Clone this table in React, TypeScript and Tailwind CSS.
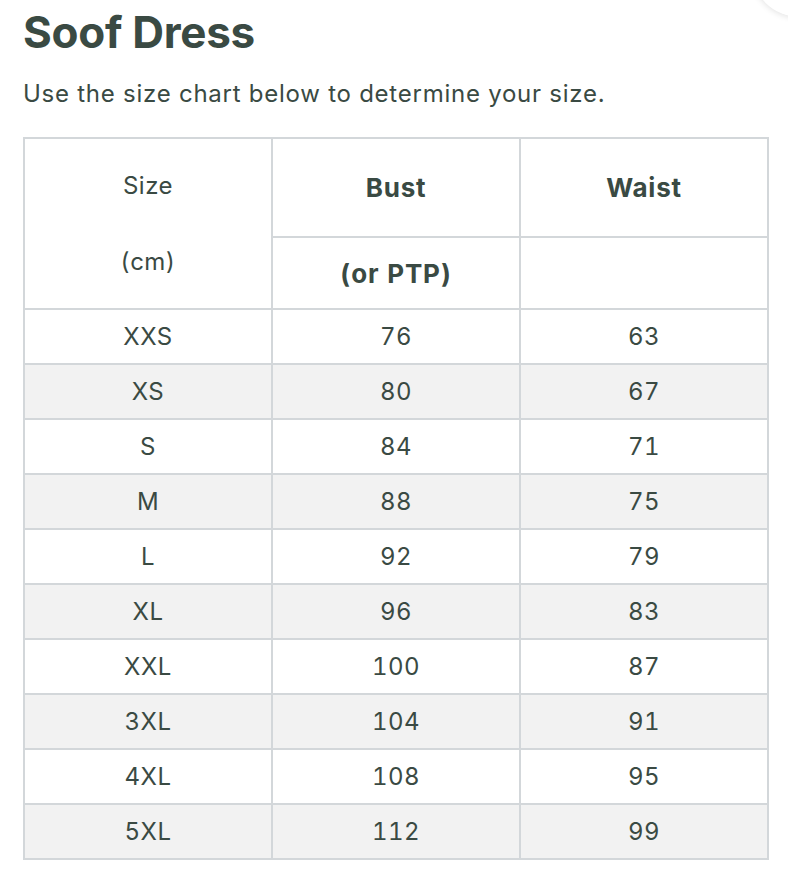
const rows: [string, string, string][] = [
  ["XXS", "76", "63"],
  ["XS", "80", "67"],
  ["S", "84", "71"],
  ["M", "88", "75"],
  ["L", "92", "79"],
  ["XL", "96", "83"],
  ["XXL", "100", "87"],
  ["3XL", "104", "91"],
  ["4XL", "108", "95"],
  ["5XL", "112", "99"],
];

export default function App() {
  return (
    <div
      className="relative min-h-[884px] w-[788px] overflow-hidden bg-white px-[23px] pt-[6px] text-[#3a4a43]"
      style={{ fontFamily: "Inter, 'Noto Sans', sans-serif" }}
    >
      {/* close button peeking in from the corner */}
      <div className="absolute left-[751px] top-[-81px] h-[98px] w-[98px] rounded-full bg-white shadow-[0_1px_6px_rgba(0,0,0,0.12)]" />

      <h1 className="text-[44px] font-bold leading-[52px] tracking-[-0.3px]">Soof Dress</h1>
      <p className="mt-[21px] text-[24px] leading-[30px] tracking-[0.75px]">
        Use the size chart below to determine your size.
      </p>

      <table className="mt-[28px] w-[744px] table-fixed border-collapse border-2 border-[#d3d7da] text-center text-[24px] tracking-[0.5px] tabular-nums">
        <thead>
          <tr>
            <th rowSpan={2} className="w-[248px] border-2 border-[#d3d7da] font-normal">
              <div className="flex flex-col items-center gap-[46px] leading-[30px]">
                <span>Size</span>
                <span>(cm)</span>
              </div>
            </th>
            <th className="h-[99px] w-[248px] border-2 border-[#d3d7da] text-[26px] font-bold tracking-[0.8px]">
              Bust
            </th>
            <th className="h-[99px] w-[248px] border-2 border-[#d3d7da] text-[26px] font-bold tracking-[0.8px]">
              Waist
            </th>
          </tr>
          <tr>
            <th className="h-[72px] border-2 border-[#d3d7da] text-[26px] font-bold tracking-[0.8px]">
              (or PTP)
            </th>
            <th className="h-[72px] border-2 border-[#d3d7da]" />
          </tr>
        </thead>
        <tbody>
          {rows.map(([size, bust, waist], i) => (
            <tr key={size} className={i % 2 === 1 ? "bg-[#f2f2f2]" : "bg-white"}>
              <td className="h-[55px] border-2 border-[#d3d7da]">{size}</td>
              <td className="h-[55px] border-2 border-[#d3d7da]">{bust}</td>
              <td className="h-[55px] border-2 border-[#d3d7da]">{waist}</td>
            </tr>
          ))}
        </tbody>
      </table>
    </div>
  );
}
